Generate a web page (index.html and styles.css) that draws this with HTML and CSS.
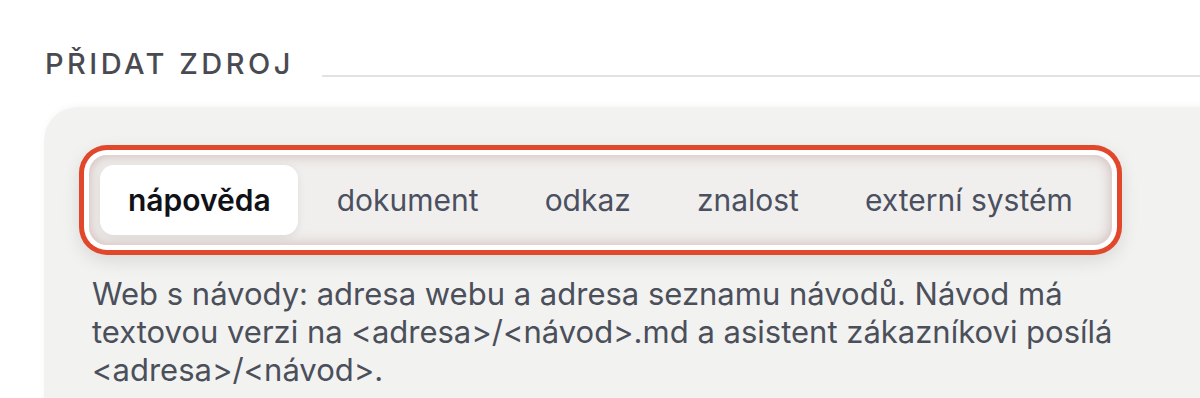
FILE: index.html
```html
<!DOCTYPE html>
<html lang="cs">
<head>
<meta charset="utf-8">
<link rel="stylesheet" href="styles.css">
</head>
<body>
<section class="section">
  <header class="section-head">
    <h2 class="section-title">PŘIDAT ZDROJ</h2>
    <span class="section-rule"></span>
  </header>
  <div class="panel">
    <div class="tabs">
      <span class="tab tab-active">nápověda</span>
      <span class="tab">dokument</span>
      <span class="tab">odkaz</span>
      <span class="tab">znalost</span>
      <span class="tab">externí systém</span>
    </div>
    <p class="desc">Web s návody: adresa webu a adresa seznamu návodů. Návod má textovou verzi na &lt;adresa&gt;/&lt;návod&gt;.md a asistent zákazníkovi posílá &lt;adresa&gt;/&lt;návod&gt;.</p>
  </div>
</section>
</body>
</html>
```

FILE: styles.css
```css
* { box-sizing: border-box; }
html, body { margin: 0; background: #ffffff; }
body {
  font-family: Inter, "Noto Sans", "DejaVu Sans", sans-serif;
  overflow: hidden;
  width: 1200px;
  height: 398px;
}
.section { padding-top: 44px; }
.section-head {
  display: flex;
  align-items: flex-end;
  padding-left: 45px;
}
.section-title {
  margin: 0;
  font-size: 29px;
  font-weight: 500;
  letter-spacing: 0.12em;
  color: #4a4a52;
  line-height: 40px;
}
.section-rule {
  flex: 1;
  height: 2px;
  background: #e2e2e2;
  margin-left: 28px;
  margin-bottom: 7px;
}
.panel {
  margin-top: 23px;
  margin-left: 44px;
  width: 1300px;
  background: #f2f2f1;
  border-radius: 34px 0 0 0;
  padding: 48px 0 0 45px;
  height: 400px;
  box-shadow: 0 -2px 6px rgba(0,0,0,0.03);
}
.tabs {
  display: inline-flex;
  gap: 11px;
  padding: 10px 12px 10px 11px;
  border-radius: 18px;
  background: #f0efee;
  box-shadow:
    inset 0 0 14px rgba(150, 95, 85, 0.4),
    0 0 0 5px #ffffff,
    0 0 0 10px #e0472b,
    0 6px 18px 10px rgba(0, 0, 0, 0.1);
}
.tab {
  font-size: 30px;
  line-height: 70px;
  padding: 0 27px 0 28px;
  color: #4b5060;
  border-radius: 14px;
}
.tab-active {
  background: #ffffff;
  color: #111218;
  font-weight: 600;
  box-shadow: 0 2px 8px rgba(0,0,0,0.08);
}
.desc {
  margin: 30px 0 0 3px;
  width: 1040px;
  font-size: 31px;
  line-height: 38px;
  color: #4b4f5a;
}
```
